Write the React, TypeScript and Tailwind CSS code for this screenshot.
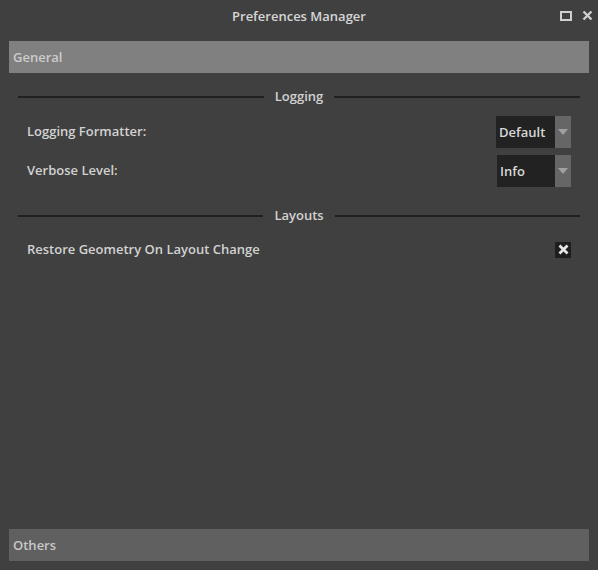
import React from 'react';

const font = { fontFamily: '"Open Sans", "DejaVu Sans", sans-serif' };

const Separator: React.FC<{ label: string }> = ({ label }) => (
  <div className="flex items-center gap-[11px] mx-[9px]">
    <div className="flex-1 h-[2px] bg-[#202020]" />
    <span className="text-[13px] font-semibold text-[#d2d2d2] leading-none">{label}</span>
    <div className="flex-1 h-[2px] bg-[#202020]" />
  </div>
);

const Combo: React.FC<{ value: string; width: string }> = ({ value, width }) => (
  <div className={`flex h-[32px] ${width}`}>
    <div className="flex-1 bg-[#222222] flex items-center pl-[3px] pt-[1px] text-[13px] font-semibold text-[#d8d8d8]">
      {value}
    </div>
    <div className="w-[16px] bg-[#666666] flex items-center justify-center">
      <svg width="10" height="6" viewBox="0 0 10 6">
        <path d="M0 0 H10 L5 6 Z" fill="#a0a0a0" />
      </svg>
    </div>
  </div>
);

const App: React.FC = () => {
  return (
    <div className="w-[598px] h-[570px] bg-[#404040] flex flex-col px-[9px] pb-[9px]" style={font}>
      {/* Title bar */}
      <div className="relative h-[41px] flex items-start justify-center pt-[7px]">
        <span className="text-[13px] font-semibold text-[#d6d6d6]">Preferences Manager</span>
        <div className="absolute right-[-4px] top-[10px] flex items-center gap-[10px]">
          <svg width="12" height="10" viewBox="0 0 12 10">
            <rect x="1" y="1" width="10" height="8" fill="none" stroke="#cfcfcf" strokeWidth="2" />
          </svg>
          <svg width="11" height="11" viewBox="0 0 11 11">
            <path d="M1.5 1.5 L9.5 9.5 M9.5 1.5 L1.5 9.5" stroke="#cfcfcf" strokeWidth="2.4" />
          </svg>
        </div>
      </div>

      {/* General header */}
      <div className="h-[32px] bg-[#808080] flex items-center px-[4px] pt-[2px] text-[13px] font-semibold text-[#cccccc]">
        General
      </div>

      <div className="flex-1 flex flex-col">
        <div className="mt-[17px]">
          <Separator label="Logging" />
        </div>
        <div className="mt-[13px] mx-[18px] flex flex-col gap-[7px]">
          <div className="flex items-center justify-between">
            <span className="text-[13px] font-semibold text-[#d2d2d2]">Logging Formatter:</span>
            <Combo value="Default" width="w-[75px]" />
          </div>
          <div className="flex items-center justify-between">
            <span className="text-[13px] font-semibold text-[#d2d2d2]">Verbose Level:</span>
            <Combo value="Info" width="w-[74px]" />
          </div>
        </div>
        <div className="mt-[22px]">
          <Separator label="Layouts" />
        </div>
        <div className="mt-[18px] mx-[18px] flex items-center justify-between">
          <span className="text-[13px] font-semibold text-[#d2d2d2]">Restore Geometry On Layout Change</span>
          <div className="w-[16px] h-[16px] bg-[#1e1e1e] flex items-center justify-center">
            <svg width="11" height="11" viewBox="0 0 11 11">
              <path d="M1.5 1.5 L9.5 9.5 M9.5 1.5 L1.5 9.5" stroke="#e6e6e6" strokeWidth="2.8" />
            </svg>
          </div>
        </div>
      </div>

      {/* Others header */}
      <div className="h-[32px] bg-[#606060] flex items-center px-[4px] pt-[2px] text-[13px] font-semibold text-[#c8c8c8]">
        Others
      </div>
    </div>
  );
};

export default App;
